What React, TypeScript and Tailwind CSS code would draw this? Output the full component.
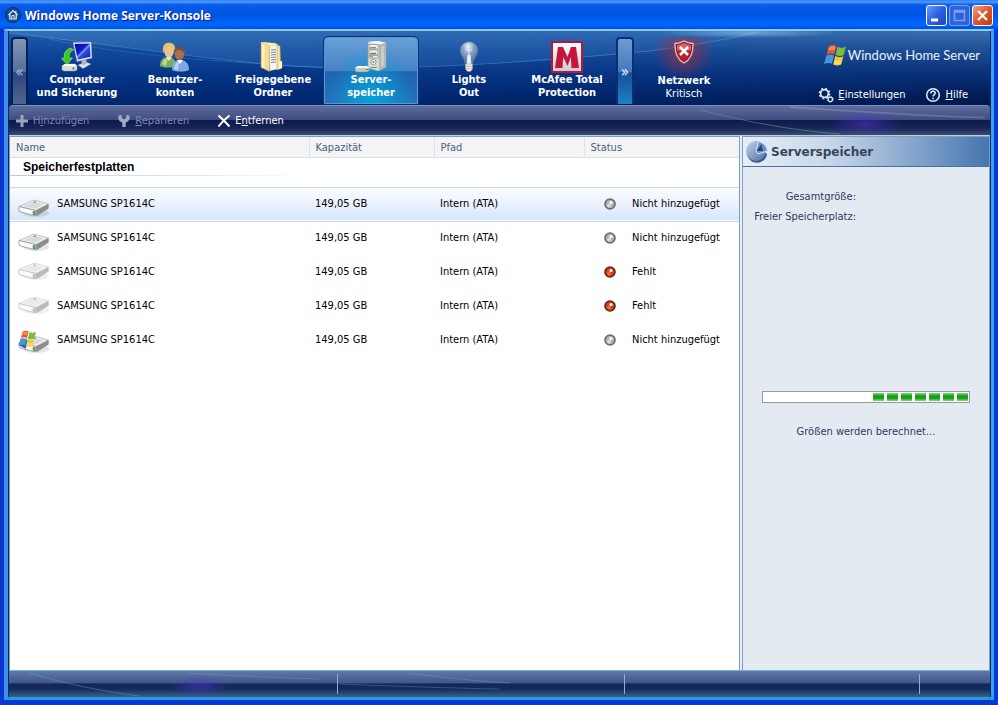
import type { ReactNode } from "react";
import clsx from "clsx";

type Disk = {
  name: string;
  capacity: string;
  path: string;
  status: string;
  missing?: boolean;
  system?: boolean;
};

const disks: Disk[] = [
  { name: "SAMSUNG SP1614C", capacity: "149,05 GB", path: "Intern (ATA)", status: "Nicht hinzugefügt" },
  { name: "SAMSUNG SP1614C", capacity: "149,05 GB", path: "Intern (ATA)", status: "Nicht hinzugefügt" },
  { name: "SAMSUNG SP1614C", capacity: "149,05 GB", path: "Intern (ATA)", status: "Fehlt", missing: true },
  { name: "SAMSUNG SP1614C", capacity: "149,05 GB", path: "Intern (ATA)", status: "Fehlt", missing: true },
  { name: "SAMSUNG SP1614C", capacity: "149,05 GB", path: "Intern (ATA)", status: "Nicht hinzugefügt", system: true },
];

function HomeIcon() {
  return (
    <svg viewBox="0 0 16 16" className="size-4">
      <circle cx="8" cy="8" r="7.5" fill="#164b8c" stroke="#0a2f6c" />
      <path d="M3.5 8 8 3.6 12.5 8M4.8 7.2V12h6.4V7.2M10.8 4v2" fill="none" stroke="#d9ecff" strokeWidth="1.2" />
      <path d="M6.8 12V8.6h2.4V12" fill="none" stroke="#d9ecff" strokeWidth="1" />
    </svg>
  );
}

function FlagShape() {
  return (
    <>
      <path d="M4.2 2.2C6.6.6 9 .5 11.3 1.8L9.4 9.4C7.2 8.2 5 8.3 2.3 9.6Z" fill="#e8592a" />
      <path d="M12.3 2.4c2.6 1.3 5 1.2 7.7-.2L18 10c-2.5 1.2-5 1.2-7.5-.1Z" fill="#7dbb3c" />
      <path d="M2 10.6c2.7-1.3 4.9-1.3 7.1-.1L7.2 18.1C5 16.9 2.7 17 0 18.3Z" fill="#4a94dd" />
      <path d="M10.2 11c2.5 1.3 5 1.3 7.5.1l-2 7.6c-2.5 1.3-5 1.2-7.4 0Z" fill="#fbc42c" />
      <path d="M4.6 3.2C6.6 2 8.5 2 10.2 2.7l-.8 3C7.5 5 5.6 5.2 3.8 6Z" fill="#ffb08a" opacity=".6" />
      <path d="M9.9 14.5c2 .9 4.3.9 6.4 0l-.8 3.5c-2.1 1-4.3.9-6.4 0Z" fill="#fff0a0" opacity=".5" />
    </>
  );
}

function ComputerIcon() {
  return (
    <svg viewBox="0 0 32 32" className="size-8">
      <defs>
        <linearGradient id="screen" x1="0" y1="0" x2="1" y2="1">
          <stop offset="0" stopColor="#0404a0" />
          <stop offset=".45" stopColor="#1420d0" />
          <stop offset=".5" stopColor="#7f9cf4" />
          <stop offset=".6" stopColor="#2c44dc" />
          <stop offset="1" stopColor="#1020b8" />
        </linearGradient>
      </defs>
      <path d="m17 24 8-3 5 2-8 4.5Z" fill="#dfe2ea" stroke="#99a3b8" strokeWidth=".4" />
      <path d="m20 18 5 0 1 5-5 1Z" fill="#aeb4c2" />
      <path d="m12 1.5 18-.5 1 16-15 3.5Z" fill="#e3e7f2" stroke="#8b9cc4" strokeWidth=".5" />
      <path d="m13.500 3 15.200-.4.8 13.200-12.700 2.800Z" fill="url(#screen)" />
      <path d="M10 7C4 9 2.500 13 3.500 17l-3 .3 5.500 6.200 5.500-6.500H8.200c-.5-4 .8-6.500 4.200-8.200Z" fill="#39c722" stroke="#8af06c" strokeWidth=".7" />
      <path d="m1 25 3-2h10l2 2v4l-2 1H3l-2-1Z" fill="#dcddda" stroke="#999" strokeWidth=".5" />
      <path d="m1 25 3-2h10l2 2H1Z" fill="#fafafa" />
      <circle cx="12.500" cy="27.500" r="1.200" fill="#4caf3a" />
    </svg>
  );
}

function UsersIcon() {
  return (
    <svg viewBox="0 0 32 32" className="size-8">
      <path d="M1 25c0-6 3-9 8-9s8 3 8 9c-4 2-12 2-16 0Z" fill="#7cae58" />
      <path d="M3 23c1-4 3-6 6-6l-2 8Z" fill="#b5d996" />
      <path d="m7 16 3 4 3-4Z" fill="#f3e6cf" />
      <ellipse cx="10" cy="9.5" rx="5" ry="7" fill="#edc18e" />
      <path d="M4 12C3 4 6 1.500 10.500 1.800 15 2 17 5 16 12 14.500 9 15 6 12 5.500 8 5 6 7 4 12Z" fill="#dfc468" />
      <path d="M13 29c0-7 3-10 8-10s9 3 9 10c-4 2-13 2-17 0Z" fill="#7da9de" />
      <path d="M15 28c1-5 2-7 5-8l-1 9Z" fill="#b7d3f2" />
      <path d="m18 19 3 4 3-4Z" fill="#fff" />
      <ellipse cx="20.500" cy="13" rx="4.800" ry="6" fill="#a8714b" />
      <path d="M15.300 13c-1-5 1.500-8 6-7.500 4.500.5 5.500 4 4.200 8-.8-3-3-5-7-4.500-1.600.4-2 2.500-3.200 4Z" fill="#6b5552" />
    </svg>
  );
}

function FolderIcon() {
  return (
    <svg viewBox="0 0 32 32" className="size-8">
      <path d="m4 1 14 1 4 3v22l-9 3Z" fill="#dcc07a" />
      <path d="m12 5 9-1v24l-8 1.500Z" fill="#f5f5f3" stroke="#aaa" strokeWidth=".4" />
      <path d="m14 9 5-.5m-5 3 5-.5m-5 3 5-.5m-5 3 5-.5m-5 3 5-.5m-5 3 5-.5" stroke="#777" strokeWidth=".9" />
      <path d="m4 1 8.500 4v25.500L4 26.500Z" fill="#f5dc94" stroke="#ba9a48" strokeWidth=".5" />
      <path d="m5 2.500 2.500 1.300V27L5 26Z" fill="#fff1bd" />
      <path d="m4 1 15 1.500 2 2-8.500.5Z" fill="#fbe9b0" />
      <path d="m20 4 3 1 .5 15L25 21v6l-5 2Z" fill="#f7df98" stroke="#ba9a48" strokeWidth=".5" />
      <path d="m22 21 3-1v7l-3 1Z" fill="#fff4ca" />
    </svg>
  );
}

function ServerIcon() {
  return (
    <svg viewBox="0 0 32 32" className="size-8">
      <path d="m13 1 10-1 8 2v24l-8 4-10-3Z" fill="#d8d9d3" stroke="#999c96" strokeWidth=".5" />
      <path d="m13 1 10-1 8 2-7 1.500Z" fill="#fff" />
      <path d="m24 3.500 7-1.500v24l-7 4Z" fill="#b4b7b0" />
      <path d="m26 6 3-1v19l-3 1.500Z" fill="#cbcec7" />
      <path d="M14 3.500h9v4.500h-9Zm0 5.500h9v4.500h-9Zm0 5.500h9V17h-9Z" fill="#f0f0ea" stroke="#7d817a" strokeWidth=".6" />
      <path d="M15 6.800h6M15 12.300h6" stroke="#5d635b" strokeWidth="1" />
      <circle cx="18.500" cy="21" r="2.600" fill="#fff" stroke="#70766e" strokeWidth=".7" />
      <circle cx="18.500" cy="21" r="1" fill="#777" />
      <path d="M15 15.700h3M16 26.500h6" stroke="#6f9b62" strokeWidth="1" />
      <path d="m0 27 3-2h9l2 2v3l-2 1H2l-2-1Z" fill="#c6c8c4" stroke="#858985" strokeWidth=".5" />
      <path d="m0 27 3-2h9l2 2Z" fill="#fff" />
      <path d="M11 28.500h2" stroke="#36b030" strokeWidth="1" />
    </svg>
  );
}

function BulbIcon() {
  return (
    <svg viewBox="0 0 32 32" className="size-8">
      <defs>
        <radialGradient id="bulb" cx=".45" cy=".2" r=".8">
          <stop offset="0" stopColor="#f4f9ff" />
          <stop offset=".4" stopColor="#8ba3c6" />
          <stop offset="1" stopColor="#425f93" />
        </radialGradient>
      </defs>
      <path d="M16 1c5 0 8.500 3.700 8.500 8.300 0 5.200-4.500 7.500-5 14.700h-7c-.5-7.200-5-9.500-5-14.700C7.500 4.700 11 1 16 1Z" fill="url(#bulb)" stroke="#7d98be" strokeWidth=".6" />
      <path d="M13 9h6M16 9v5m-2 9 1-9h2l1 9Z" fill="#eef5ff" stroke="#dfeafb" strokeWidth="1" />
      <path d="M12.500 23h7v5l-2 2.500h-3l-2-2.500Z" fill="#f1efe7" stroke="#918f85" strokeWidth=".5" />
      <path d="M12.500 25.500h7m-7 2.200h7" stroke="#b5b1a5" strokeWidth=".8" />
    </svg>
  );
}

function McAfeeIcon() {
  return (
    <svg viewBox="0 0 32 32" className="size-8">
      <defs>
        <linearGradient id="plate" x1="0" y1="0" x2="0" y2="1">
          <stop offset="0" stopColor="#fff" />
          <stop offset="1" stopColor="#c9cbd2" />
        </linearGradient>
      </defs>
      <path d="M1 1h30v30H1Z" fill="url(#plate)" stroke="#b21839" strokeWidth="2" />
      <path d="M7 6h5l4.500 10L20 6h5l3 21h-7.500l-.7-11-3.300 9-4.300-9-.7 11H4Z" fill="#c8143b" />
    </svg>
  );
}

function ShieldIcon() {
  return (
    <svg viewBox="0 0 20 24" className="h-6 w-5">
      <path d="M10 1c3 1.800 6 2.500 9 2.500C19.300 13 17 19.500 10 23 3 19.500.7 13 1 3.500 4 3.500 7 2.800 10 1Z" fill="#7e1219" stroke="#e8c4ca" strokeWidth="1.300" />
      <path d="M10 3c2.300 1.300 4.700 1.900 7.200 2 0 8-1.900 13-7.200 16C4.700 18 2.800 13 2.800 5 5.300 4.900 7.700 4.300 10 3Z" fill="#b5212c" />
      <path d="M10 3c2.300 1.300 4.700 1.900 7.200 2 0 2-.2 4-.5 5.500H3.300C3 9 2.800 7 2.800 5 5.300 4.900 7.700 4.300 10 3Z" fill="#d8616b" />
      <path d="m6 7 8 8m0-8-8 8" stroke="#fff" strokeWidth="2.500" />
    </svg>
  );
}

function SettingsIcon() {
  return (
    <svg viewBox="0 0 16 16" className="size-4" fill="none" stroke="#dce6f5">
      <circle cx="6.500" cy="6.500" r="3.900" strokeWidth="1.800" />
      <circle cx="6.500" cy="6.500" r="5.300" strokeWidth="1.200" strokeDasharray="2 2.160" />
      <circle cx="12.300" cy="12.300" r="2.200" strokeWidth="1.200" />
      <circle cx="12.300" cy="12.300" r="3" strokeWidth=".8" strokeDasharray="1.200 1.150" />
    </svg>
  );
}

function HelpIcon() {
  return (
    <svg viewBox="0 0 16 16" className="size-4" fill="none" stroke="#e4ecf8">
      <circle cx="8" cy="8" r="6.300" strokeWidth="1.500" />
      <path d="M5.800 6.500C5.800 5 6.800 4.300 8 4.300s2.200.8 2.200 2C10.200 7.800 8 7.900 8 9.500M8 10.700v1.500" strokeWidth="1.500" />
    </svg>
  );
}

function PlusIcon() {
  return (
    <svg viewBox="0 0 14 14" className="size-3.5">
      <path d="M5.500 1h3v4.500H13v3H8.500V13h-3V8.500H1v-3h4.500Z" fill="#9ba4be" />
    </svg>
  );
}

function WrenchIcon() {
  return (
    <svg viewBox="0 0 14 14" className="size-3.5">
      <path d="M2.500 1C.6 3 1 6.500 4 8l1.300.7V13h3.400V8.700L10 8c3-1.500 3.400-5 1.500-7L9.200 1.300V4L7 5.500 4.800 4V1.300Z" fill="#a3abc2" />
    </svg>
  );
}

function RemoveIcon() {
  return (
    <svg viewBox="0 0 14 14" className="size-3.5">
      <path d="M1.500 1.500C5 4.500 9 8.500 12.500 12.500M12.500 1.500C8.500 4.500 4.500 8.500 1.500 12.500" fill="none" stroke="#fff" strokeWidth="2" />
    </svg>
  );
}

function DiskIcon({ faded, system }: { faded?: boolean; system?: boolean }) {
  return (
    <svg viewBox={faded ? "0 -3 32 32" : "0 -8 32 32"} className={clsx("size-8", faded && "opacity-60")}>
      <ellipse cx="18" cy="17" rx="13" ry="4" fill="#000" opacity=".1" />
      <path d="M1 10.500 16 4l14.500 4v4.500L19 20 1 15.500Z" fill="#a7aaa9" />
      <path d="M1 10.500 16 4l14.500 4L18 14.500Z" fill="#f1f2f2" stroke="#a8abab" strokeWidth=".6" />
      <path d="m5 10.300 11-4.800 10 2.700-8.500 4.500Z" fill="#d9dbdb" />
      <path d="M1 10.500 18 14.500 17.500 20 2 15.800C.5 14 .5 12 1 10.500Z" fill="#fafafa" stroke="#909392" strokeWidth=".8" />
      <path d="M18 14.500 30.500 8v4.500L18.500 20Z" fill="#8b8e8d" />
      <path d="m15.500 5.800 2.500.6" stroke="#888" strokeWidth="1.200" />
      <path d="M16 15v4" stroke={faded ? "#9a9a9a" : "#5d9a5f"} strokeWidth="2.500" />
      {system && (
        <g transform="translate(1 -2) scale(.85)">
          <path d="m2 10 8 2-2 10-8-4Z" fill="#1c5fae" />
          <FlagShape />
        </g>
      )}
    </svg>
  );
}

function StatusDot({ missing }: { missing?: boolean }) {
  return (
    <svg viewBox="0 0 12 12" className="size-3 shrink-0">
      <circle cx="6" cy="6" r="5" fill={missing ? "#c8401c" : "#b0b0b0"} stroke={missing ? "#6a2113" : "#696969"} strokeWidth="1.600" />
      <circle cx="5" cy="7.500" r="2" fill={missing ? "#f26a38" : "#dadada"} />
      <circle cx="7" cy="4.500" r="1.600" fill="#fff" />
    </svg>
  );
}

function PieIcon() {
  return (
    <svg viewBox="0 0 24 24" className="size-6">
      <defs>
        <linearGradient id="pie" x1="0" y1="0" x2="1" y2="1">
          <stop offset="0" stopColor="#c3d4e8" />
          <stop offset="1" stopColor="#4a6fa6" />
        </linearGradient>
      </defs>
      <path d="M2 15c2 6 7 8.500 12 7.500 5-1 8-5 8-9l-10-2Z" fill="#38588e" />
      <circle cx="11" cy="11" r="10" fill="url(#pie)" />
      <path d="m11 11 2.500-9.500c5 1 8.500 4.500 9 9.500l-9.500 3Z" fill="#6e92c6" stroke="#dbe7f5" strokeWidth="1" />
      <path d="m11.500 11 5-7 1.500 7Z" fill="#24457e" />
    </svg>
  );
}

function HeaderGlow() {
  return (
    <svg viewBox="0 0 980 74" preserveAspectRatio="none" className="absolute inset-0 size-full">
      <defs>
        <linearGradient id="swoosh" x1="0" y1="0" x2="1" y2="0">
          <stop offset="0" stopColor="#6fb4e8" stopOpacity=".2" />
          <stop offset="1" stopColor="#3b86d8" stopOpacity=".14" />
        </linearGradient>
        <radialGradient id="topGlow">
          <stop offset="0" stopColor="#9cd0f0" stopOpacity=".6" />
          <stop offset="1" stopColor="#9cd0f0" stopOpacity="0" />
        </radialGradient>
      </defs>
      <path d="M0 2C140 18 240 36 330 37 430 38 560 28 640 20 700 12 740 4 750 0H0Z" fill="url(#swoosh)" />
      <path d="M0 2C140 18 240 36 330 37 430 38 560 28 640 20 700 12 740 4 750 0" fill="none" stroke="#69aee8" strokeOpacity=".4" />
      <path d="M40 8C120 26 240 33 330 37" fill="none" stroke="#5ba2e2" strokeOpacity=".25" />
      <ellipse cx="740" cy="2" rx="90" ry="5" fill="url(#topGlow)" />
    </svg>
  );
}

function BarGlow() {
  return (
    <svg viewBox="0 0 980 30" preserveAspectRatio="none" className="absolute inset-0 size-full">
      <defs>
        <radialGradient id="violet">
          <stop offset="0" stopColor="#4a35c8" stopOpacity=".55" />
          <stop offset="1" stopColor="#4a35c8" stopOpacity="0" />
        </radialGradient>
      </defs>
      <ellipse cx="855" cy="18" rx="36" ry="15" fill="url(#violet)" />
      <path d="M690 4C730 14 770 24 830 29" fill="none" stroke="#69a9b4" strokeOpacity=".5" />
      <path d="M780 1C840 5 900 10 975 12" fill="none" stroke="#b4cbe8" strokeOpacity=".25" strokeWidth="2" />
    </svg>
  );
}

function StatusGlow() {
  return (
    <svg viewBox="0 0 980 26" preserveAspectRatio="none" className="absolute inset-0 size-full">
      <ellipse cx="190" cy="15" rx="30" ry="12" fill="url(#violet)" />
      <path d="M20 2C60 14 90 20 130 25" fill="none" stroke="#6ab0ae" strokeOpacity=".4" />
      <path d="M180 2C220 5 260 6 310 8M330 13C380 15 430 17 490 18M400 2C430 6 460 10 500 12" fill="none" stroke="#7fb5c8" strokeOpacity=".3" />
    </svg>
  );
}

function Tab({ icon, lines, active }: { icon: ReactNode; lines: string[]; active?: boolean }) {
  return (
    <button
      type="button"
      aria-pressed={!!active}
      className={clsx(
        "flex shrink-0 flex-col items-center rounded-t-sm border pt-[3px] text-[11px] leading-[13px] font-bold text-white",
        active
          ? "mx-0.5 w-[94px] border-[#5d95d0] bg-[radial-gradient(ellipse_at_bottom,#00a4d8_0%,transparent_65%),linear-gradient(#6a9fd8,#4682c6_50%,#1f63b0_52%,#2474bc)] outline-1 outline-[#08337c]"
          : "w-[98px] border-transparent"
      )}
    >
      {icon}
      {lines.map((line) => (
        <span key={line} className="whitespace-nowrap">
          {line}
        </span>
      ))}
    </button>
  );
}

function ToolButton({ icon, label, disabled }: { icon: ReactNode; label: [string, string, string]; disabled?: boolean }) {
  return (
    <button type="button" disabled={disabled} className={clsx("flex items-center gap-1", disabled ? "text-[#7f89a8]" : "text-white")}>
      {icon}
      <span>
        {label[0]}
        <u>{label[1]}</u>
        {label[2]}
      </span>
    </button>
  );
}

function TitleBar() {
  return (
    <header className="flex h-[29px] items-center bg-[linear-gradient(#2f7df0,#4a9aff_7%,#0a5ceb_16%,#0054e3_50%,#0066ff_85%,#0052d8)] px-[5px]">
      <HomeIcon />
      <h1 className="ml-1 flex-1 pt-0.5 text-[12px] font-bold text-white [font-family:'Open_Sans','Noto_Sans',sans-serif] [text-shadow:1px_1px_#0a1883]">
        Windows Home Server-Konsole
      </h1>
      <div className="flex gap-0.5 pt-0.5">
        <button type="button" aria-label="Minimieren" className="size-[21px] rounded-[3px] border border-white bg-[linear-gradient(135deg,#6f9cf8,#2a5fe0_50%,#1c46c4)]">
          <svg viewBox="0 0 19 19" className="size-full">
            <path d="M4 12.500h7v3H4Z" fill="#fff" />
          </svg>
        </button>
        <button type="button" aria-label="Maximieren" disabled className="size-[21px] rounded-[3px] border border-[#7ba0ee] bg-[#2c62dc]">
          <svg viewBox="0 0 19 19" className="size-full">
            <path d="M4.500 4.500h10v10h-10ZM4.500 6h10" fill="none" stroke="#7d9ff0" strokeWidth="1.500" />
          </svg>
        </button>
        <button type="button" aria-label="Schließen" className="size-[21px] rounded-[3px] border border-white bg-[linear-gradient(135deg,#f0a088,#e2552c_50%,#c03a14)]">
          <svg viewBox="0 0 19 19" className="size-full">
            <path d="m5 5 9 9m0-9-9 9" stroke="#fff" strokeWidth="2.200" />
          </svg>
        </button>
      </div>
    </header>
  );
}

function Navigation() {
  return (
    <div className="relative bg-[linear-gradient(90deg,#0040a866,#0040a844_60%,transparent),linear-gradient(#3a70ae,#1c4c92_28%,#0a3076_58%,#021c55_88%,#01184c)]">
      <HeaderGlow />
      <div className="relative flex h-[74px] items-stretch pt-[6px] pb-px">
        <button type="button" aria-label="Zurück" className="ml-0.5 w-[17px] shrink-0 rounded-t-sm border-2 border-b-0 border-[#04205c] bg-[linear-gradient(#8295b4,#566e9a_50%,#2b4680_52%,#52658f)] text-[15px] text-[#b4c1da]">
          «
        </button>
        <Tab icon={<ComputerIcon />} lines={["Computer", "und Sicherung"]} />
        <Tab icon={<UsersIcon />} lines={["Benutzer-", "konten"]} />
        <Tab icon={<FolderIcon />} lines={["Freigegebene", "Ordner"]} />
        <Tab icon={<ServerIcon />} lines={["Server-", "speicher"]} active />
        <Tab icon={<BulbIcon />} lines={["Lights", "Out"]} />
        <Tab icon={<McAfeeIcon />} lines={["McAfee Total", "Protection"]} />
        <button type="button" aria-label="Weiter" className="flex w-[18px] shrink-0 items-center justify-center rounded-t-sm border-2 border-b-0 border-[#0a3070] bg-[linear-gradient(#6d9bd4,#4379ba_50%,#174f9a_52%,#1c80c8)] text-[15px] text-white">
          »
        </button>
        <button type="button" className="flex w-[100px] shrink-0 flex-col items-center bg-[radial-gradient(circle_at_50%_14px,#c03038aa_0,#9c304066_16px,transparent_30px)] pt-[3px] text-[11px] leading-[13px] text-white">
          <span className="mb-2.5">
            <ShieldIcon />
          </span>
          <b>Netzwerk</b>
          <span>Kritisch</span>
        </button>
        <div className="flex flex-1 flex-col items-end justify-between pt-1.5 pb-px pr-2.5">
          <div className="flex items-center gap-px text-[13px] leading-6 whitespace-nowrap text-[#eaf2fc] [font-family:Lato,'Open_Sans',sans-serif]">
            <svg viewBox="-1 0 22 20" className="h-[22px] w-6">
              <FlagShape />
            </svg>
            Windows Home Server
          </div>
          <div className="flex gap-5 pr-3">
            <a href="#einstellungen" className="flex items-center gap-1 text-white">
              <SettingsIcon />
              <span>
                <u>E</u>instellungen
              </span>
            </a>
            <a href="#hilfe" className="flex items-center gap-1 text-white">
              <HelpIcon />
              <span>
                <u>H</u>ilfe
              </span>
            </a>
          </div>
        </div>
      </div>
    </div>
  );
}

function Toolbar() {
  return (
    <div className="bg-[#021a4e]">
      <div className="relative flex h-[30px] items-center rounded-t-sm border-t border-[#7d8fb8] bg-[linear-gradient(#5d6d9c,#3e4b80_48%,#0f1a4c_50%,#182455_75%,#3a4c78)] pl-1.5">
        <BarGlow />
        <div className="relative flex gap-7">
          <ToolButton icon={<PlusIcon />} label={["H", "i", "nzufügen"]} disabled />
          <ToolButton icon={<WrenchIcon />} label={["", "R", "eparieren"]} disabled />
          <ToolButton icon={<RemoveIcon />} label={["E", "n", "tfernen"]} />
        </div>
      </div>
    </div>
  );
}

function DiskTable() {
  return (
    <section className="flex-1 border-x border-t border-[#7f9dbd] bg-white">
      <table className="w-full table-fixed border-collapse text-left text-black">
        <colgroup>
          <col className="w-[299px]" />
          <col className="w-[125px]" />
          <col className="w-[150px]" />
          <col />
        </colgroup>
        <thead>
          <tr className="h-5 border-b border-[#dcdfe3] bg-[#f3f4f5] text-[#4c607a]">
            <th className="border-r border-[#dfe2e6] pt-0.5 pl-1.5 font-normal">Name</th>
            <th className="border-r border-[#dfe2e6] pt-0.5 pl-1.5 font-normal">Kapazität</th>
            <th className="border-r border-[#dfe2e6] pt-0.5 pl-1.5 font-normal">Pfad</th>
            <th className="pt-0.5 pl-1.5 font-normal">Status</th>
          </tr>
        </thead>
        <tbody>
          <tr className="h-[30px]">
            <th colSpan={4} className="p-0 align-top">
              <div className="flex h-[18px] w-[300px] items-center bg-[linear-gradient(90deg,#b4cdec,#dbe7f5_60%,transparent)] bg-[length:100%_1px] bg-bottom bg-no-repeat pl-[13px] text-[12px] [font-family:'Liberation_Sans',Arial,sans-serif]">
                Speicherfestplatten
              </div>
            </th>
          </tr>
          {disks.map((disk, index) => (
            <tr
              key={index}
              className={clsx("h-[34px]", index === 0 && "border-y border-[#c5daf0] bg-[linear-gradient(#fbfdff,#eaf2fd_50%,#d6e6fa)]")}
            >
              <td className="p-0">
                <div className="flex items-center gap-[7px] pl-2">
                  <DiskIcon faded={disk.missing} system={disk.system} />
                  {disk.name}
                </div>
              </td>
              <td className="py-0 pl-1.5">{disk.capacity}</td>
              <td className="py-0 pl-1.5">{disk.path}</td>
              <td className="py-0 pl-5">
                <div className="flex items-center gap-4 whitespace-nowrap">
                  <StatusDot missing={disk.missing} />
                  {disk.status}
                </div>
              </td>
            </tr>
          ))}
        </tbody>
      </table>
    </section>
  );
}

function StoragePanel() {
  return (
    <aside className="w-[248px] shrink-0 border-x border-t border-[#7f9dbd] bg-[#e3eaf2] text-[#2b3c60]">
      <h2 className="flex h-[30px] items-center gap-0.5 border-b border-[#4a72a8] bg-[linear-gradient(90deg,#e6eef7,#c8d7e9_35%,#8eabd0_65%,#4675ae)] pl-0.5 text-[12px] font-bold text-[#37465c] [font-family:'DejaVu_Sans',Verdana,sans-serif]">
        <PieIcon />
        Serverspeicher
      </h2>
      <dl className="mt-5 w-[113px] text-right leading-5 whitespace-nowrap">
        <dt>Gesamtgröße:</dt>
        <dt>Freier Speicherplatz:</dt>
      </dl>
      <div role="progressbar" aria-labelledby="progress-text" className="mx-[19px] mt-[164px] flex h-3 items-center justify-end gap-[3px] border border-[#9a9a9a] bg-white px-px">
        {Array.from({ length: 7 }, (_, i) => (
          <span key={i} className="h-2 w-[11px] bg-[linear-gradient(#8bd68b,#14a014_35%,#14a014_65%,#8bd68b)]" />
        ))}
      </div>
      <p id="progress-text" className="mt-[22px] text-center">
        Größen werden berechnet...
      </p>
    </aside>
  );
}

function StatusBar() {
  return (
    <footer className="relative flex h-[27px] border-t border-[#6fb4d8] bg-[linear-gradient(#5e7aa8,#44568a_45%,#10275a_50%,#142c5c_70%,#3c6088)] py-[3px]">
      <StatusGlow />
      <div className="w-[329px] border-r border-[#8eaed6]" />
      <div className="w-[287px] border-r border-[#8eaed6]" />
      <div className="flex-1 border-r border-[#8eaed6]" />
      <div className="w-[70px]" />
    </footer>
  );
}

export default function App() {
  return (
    <div className="flex min-h-screen flex-col bg-[#0a37d2] text-[11px] leading-[14px] [font-family:'DejaVu_Sans_Condensed',Tahoma,'Noto_Sans',sans-serif]">
      <TitleBar />
      <div className="flex flex-1 flex-col px-1 pb-[5px]">
        <div className="flex flex-1 flex-col border-t-2 border-r-[3px] border-b-[3px] border-l-4 border-t-[#8cc8f8] border-r-[#31a3f2] border-b-[#239bdf] border-l-[#4191ec]">
          <div className="flex flex-1 flex-col border-x border-[#0b2868]">
            <Navigation />
            <Toolbar />
            <main className="flex flex-1 gap-0.5 border-t border-[#b9d4c8] bg-[#e8eef6]">
              <DiskTable />
              <StoragePanel />
            </main>
            <StatusBar />
          </div>
        </div>
      </div>
    </div>
  );
}
